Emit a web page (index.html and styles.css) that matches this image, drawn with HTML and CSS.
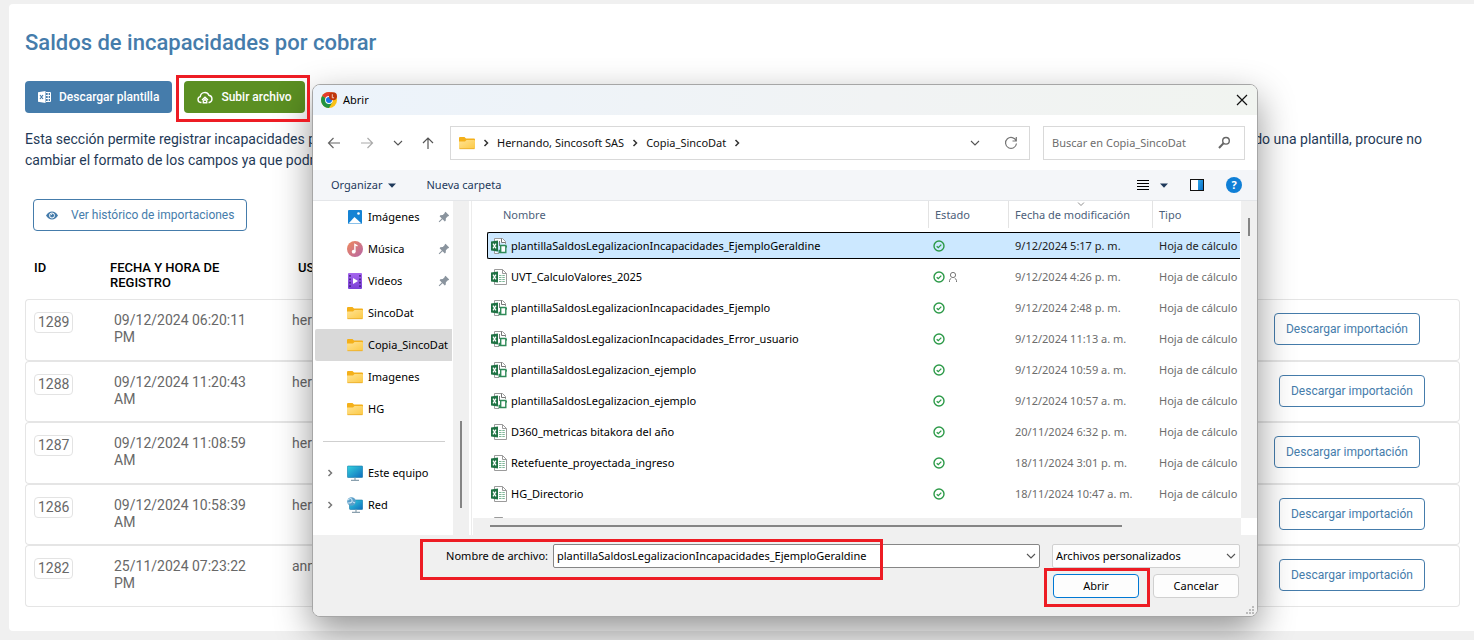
FILE: index.html
```html
<!DOCTYPE html>
<html lang="es">
<head>
<meta charset="utf-8">
<meta name="viewport" content="width=device-width, initial-scale=1">
<title>Saldos de incapacidades por cobrar</title>
<link rel="stylesheet" href="styles.css">
</head>
<body>
<svg class="sprite" aria-hidden="true">
  <defs>
    <linearGradient id="g-folder" x1="0" y1="0" x2="1" y2="1"><stop offset="0" stop-color="#ffe394"/><stop offset="1" stop-color="#fcc944"/></linearGradient>
    <linearGradient id="g-screen" x1="0" y1="0" x2="1" y2="1"><stop offset="0" stop-color="#35d3de"/><stop offset="1" stop-color="#0f6cbd"/></linearGradient>
    <linearGradient id="g-music" x1="0" y1="0" x2="1" y2="1"><stop offset="0" stop-color="#f08a5b"/><stop offset="1" stop-color="#b565a8"/></linearGradient>
    <linearGradient id="g-video" x1="0" y1="0" x2="0" y2="1"><stop offset="0" stop-color="#a566ee"/><stop offset="1" stop-color="#7a3fd6"/></linearGradient>
    <linearGradient id="g-pane" x1="0" y1="0" x2="1" y2="1"><stop offset="0" stop-color="#2fa8ea"/><stop offset="1" stop-color="#0a6fc8"/></linearGradient>
  </defs>
  <symbol id="folder" viewBox="0 0 16 16">
    <path d="M0 3a1 1 0 0 1 1-1h4.500l1.500 1.500h8a1 1 0 0 1 1 1V8H0z" fill="#f4b01a"/>
    <path d="M0 6.500h6L7.500 5H15a1 1 0 0 1 1 1v7a1 1 0 0 1-1 1H1a1 1 0 0 1-1-1z" fill="url(#g-folder)"/>
    <path d="M.5 13.700h15" stroke="#e5a520" stroke-width=".7"/>
  </symbol>
  <symbol id="pin" viewBox="0 0 12 12">
    <path d="M7.500 .8 11.200 4.500 10.400 5.300 9.900 5.200 7.900 7.200 7.700 9.700 6.800 10.400 4.600 8.200 1.400 11.300.7 10.600 3.800 7.400 1.600 5.200 2.300 4.300 4.800 4.100 6.800 2.100 6.700 1.600z" fill="#8a949e"/>
  </symbol>
  <symbol id="chevron-right" viewBox="0 0 8 10"><path d="M2.500 2 5.500 5 2.500 8" fill="none" stroke="currentColor" stroke-width="1.500"/></symbol>
  <symbol id="chevron-down" viewBox="0 0 10 8"><path d="M1 2 5 6 9 2" fill="none" stroke="currentColor" stroke-width="1.100"/></symbol>
  <symbol id="caret" viewBox="0 0 8 5"><path d="M0 .5h8L4 4.700z" fill="currentColor"/></symbol>
  <symbol id="xls" viewBox="0 0 16 16">
    <path d="M3.500 3V.5h8l4 4v11h-12V13" fill="#fff" stroke="#9b9b9b"/>
    <path d="M11.500.5v4h4" fill="none" stroke="#9b9b9b"/>
    <path d="M0 3.500 7 2.500v11L0 12.500z" fill="#1f7244"/>
    <path d="M2 5.700 5 10.300M5 5.700 2 10.300" stroke="#fff" stroke-width="1.200"/>
    <path d="M8 6.500h6M8 8.500h6M8 10.500h6M8 12.500h6" stroke="#7fb899" stroke-dasharray="2.500 .8"/>
  </symbol>
  <symbol id="xls-sync" viewBox="0 0 16 16">
    <path d="M3.500 3V.5h8l3 3V6M3.500 13v2.500H8" fill="#fff" stroke="#9b9b9b"/>
    <path d="M10.500.5v4h4M8.500 3v5" fill="none" stroke="#777"/>
    <path d="M0 3.500 7 2.500v11L0 12.500z" fill="#1f7244"/>
    <path d="M2 5.700 5 10.300M5 5.700 2 10.300" stroke="#fff" stroke-width="1.200"/>
    <path d="M9.700 7.500h5.100v7H8.200v-2h1.500zM14.800 7.500l.8 1.500-.8.500M9.700 14.500V12" fill="#fff" stroke="#2f8a58" stroke-width="1.400"/>
  </symbol>
  <symbol id="synced" viewBox="0 0 12 12"><circle cx="6" cy="6" r="5" fill="none" stroke="#2c9a48" stroke-width="1.400"/><path d="M3.700 6.200 5.300 7.700 8.300 4.600" fill="none" stroke="#2c9a48" stroke-width="1.300"/></symbol>
  <symbol id="person" viewBox="0 0 10 12"><circle cx="5" cy="4" r="2.600" fill="none" stroke="#777"/><path d="M1.500 11V9.500Q1.500 8 3.200 7.500M8.500 11V9.500Q8.500 8 6.800 7.500" fill="none" stroke="#777"/></symbol>
</svg>

<main class="card">
  <h1>Saldos de incapacidades por cobrar</h1>
  <div class="actions">
    <button class="btn btn-primary" type="button">
      <svg width="13" height="12" viewBox="0 0 13 12"><path d="M0 1.300 7.500 0v12L0 10.700z" fill="#fff"/><path d="M8 1.500h4.500v9H8M8 4.500h4.500M8 7.500h4.500M10.200 1.500v9" fill="none" stroke="#fff"/><path d="M2 4 5 8M5 4 2 8" stroke="#457cab" stroke-width="1.200"/></svg>
      Descargar plantilla
    </button>
    <span class="marked mark-upload">
      <button class="btn btn-success" type="button">
        <svg width="16" height="13" viewBox="0 0 16 13" fill="none" stroke="#fff" stroke-width="1.400"><path d="M4.500 11.500H3.700A3 3 0 0 1 3.300 5.600 4.500 4.500 0 0 1 11.900 4.300 3.700 3.700 0 0 1 12.300 11.500h-.8"/><path d="M5 9 8 6.300 11 9M8 8.500 6.300 10v1.800h3.400V10z"/></svg>
        Subir archivo
      </button>
    </span>
  </div>
  <div class="intro">
    <p><span>Esta sección permite registrar incapacidades por</span><span>cobrar, utilizando una plantilla, procure no</span></p>
    <p>cambiar el formato de los campos ya que podría</p>
  </div>
  <button class="btn btn-outline history" type="button">
    <svg width="12" height="9" viewBox="0 0 12 9"><path d="M0 4.500Q2.500.4 6 .4T12 4.500Q9.500 8.600 6 8.600T0 4.500z" fill="#457cab"/><circle cx="6" cy="4.500" r="2.500" fill="none" stroke="#fff" stroke-width="1"/><path d="M4.700 4.200 5.900 3" stroke="#fff"/></svg>
    Ver histórico de importaciones
  </button>
  <table class="imports">
    <thead><tr><th>ID</th><th>FECHA Y HORA DE REGISTRO</th><th>USUARIO</th><th></th></tr></thead>
    <tbody>
      <tr><td><span class="tag">1289</span></td><td>09/12/2024 06:20:11 PM</td><td>hernando</td><td><button class="btn btn-outline" type="button">Descargar importación</button></td></tr>
      <tr class="recent"><td><span class="tag">1288</span></td><td>09/12/2024 11:20:43 AM</td><td>hernando</td><td><button class="btn btn-outline" type="button">Descargar importación</button></td></tr>
      <tr><td><span class="tag">1287</span></td><td>09/12/2024 11:08:59 AM</td><td>hernando</td><td><button class="btn btn-outline" type="button">Descargar importación</button></td></tr>
      <tr class="recent"><td><span class="tag">1286</span></td><td>09/12/2024 10:58:39 AM</td><td>hernando</td><td><button class="btn btn-outline" type="button">Descargar importación</button></td></tr>
      <tr class="recent"><td><span class="tag">1282</span></td><td>25/11/2024 07:23:22 PM</td><td>anna</td><td><button class="btn btn-outline" type="button">Descargar importación</button></td></tr>
    </tbody>
  </table>
</main>

<section class="dialog" role="dialog" aria-labelledby="dialog-title">
  <header class="titlebar">
    <svg width="16" height="16" viewBox="0 0 16 16"><circle cx="8" cy="8" r="8" fill="#fbc116"/><path d="M8 8 1.100 4A8 8 0 0 1 14.900 4z" fill="#e33b2e"/><path d="M8 8 1.100 4A8 8 0 0 0 8 16L11.500 10z" fill="#229342"/><circle cx="8" cy="8" r="3.900" fill="#fff"/><circle cx="8" cy="8" r="3" fill="#1a73e8"/><circle cx="12" cy="4.200" r="4" fill="#bf360c"/><path d="M11.300 2.200v3.600h1.800" fill="none" stroke="#f3c9bb"/></svg>
    <span id="dialog-title">Abrir</span>
    <button class="icon-btn close" type="button" aria-label="Cerrar"><svg width="12" height="12" viewBox="0 0 12 12"><path d="M1 1 11 11M11 1 1 11" stroke="#111" stroke-width="1.200"/></svg></button>
  </header>

  <nav class="navbar">
    <div class="nav-buttons">
      <button class="icon-btn" type="button" aria-label="Atrás"><svg width="14" height="12" viewBox="0 0 14 12" fill="none" stroke="#666" stroke-width="1.200"><path d="M13 6H1.500M6.500 1 1.500 6 6.500 11"/></svg></button>
      <button class="icon-btn" type="button" aria-label="Adelante"><svg width="14" height="12" viewBox="0 0 14 12" fill="none" stroke="#aaa" stroke-width="1.200"><path d="M1 6h11.500M7.500 1 12.500 6 7.500 11"/></svg></button>
      <button class="icon-btn" type="button" aria-label="Recientes"><svg width="10" height="8"><use href="#chevron-down"/></svg></button>
      <button class="icon-btn" type="button" aria-label="Subir"><svg width="12" height="12" viewBox="0 0 12 12" fill="none" stroke="#555" stroke-width="1.200"><path d="M6 12V1M1 6 6 1 11 6"/></svg></button>
    </div>
    <div class="address">
      <svg width="16" height="16"><use href="#folder"/></svg>
      <svg class="sep" width="8" height="10"><use href="#chevron-right"/></svg>
      <span>Hernando, Sincosoft SAS</span>
      <svg class="sep" width="8" height="10"><use href="#chevron-right"/></svg>
      <span>Copia_SincoDat</span>
      <svg class="sep" width="8" height="10"><use href="#chevron-right"/></svg>
      <button class="icon-btn push" type="button" aria-label="Ubicaciones"><svg width="10" height="8"><use href="#chevron-down"/></svg></button>
      <button class="icon-btn refresh" type="button" aria-label="Actualizar"><svg width="14" height="14" viewBox="0 0 14 14" fill="none" stroke="#777" stroke-width="1.200"><path d="M12.200 5A5.500 5.500 0 1 0 12.500 7.500M12.300 1v4H8.500"/></svg></button>
    </div>
    <div class="search">
      <input type="text" placeholder="Buscar en Copia_SincoDat" aria-label="Buscar en Copia_SincoDat">
      <svg width="13" height="13" viewBox="0 0 13 13" fill="none" stroke="#666"><circle cx="8" cy="4.800" r="3.300" stroke-width="1.400"/><path d="M5.500 7.300 1 12" stroke-width="2"/></svg>
    </div>
  </nav>

  <div class="toolbar">
    <button class="tool" type="button">Organizar <svg width="8" height="5"><use href="#caret"/></svg></button>
    <button class="tool" type="button">Nueva carpeta</button>
    <button class="icon-btn push view" type="button" aria-label="Vista"><svg width="12" height="11" viewBox="0 0 12 11"><path d="M0 .5h12M0 3.500h12M0 6.500h12M0 9.500h12" stroke="#000"/></svg><svg width="8" height="5"><use href="#caret"/></svg></button>
    <button class="icon-btn" type="button" aria-label="Panel de vista previa"><svg width="14" height="12" viewBox="0 0 14 12"><rect x=".5" y=".5" width="13" height="11" fill="#fff" stroke="#111"/><path d="M8 1h5v10H8z" fill="url(#g-pane)"/></svg></button>
    <button class="help" type="button" aria-label="Ayuda">?</button>
  </div>

  <div class="browser">
    <aside class="places">
      <ul>
        <li><svg width="16" height="16" viewBox="0 0 16 16"><rect x="1" y="1" width="14" height="14" rx="1" fill="#1583d4"/><path d="M1.500 14.500 7.500 8 14.500 14.500z" fill="#fff"/><circle cx="11.500" cy="4.500" r="1.300" fill="#fff"/></svg><span>Imágenes</span><svg class="pin" width="12" height="12"><use href="#pin"/></svg></li>
        <li><svg width="16" height="16" viewBox="0 0 16 16"><circle cx="8" cy="8" r="8" fill="url(#g-music)"/><circle cx="6.700" cy="10.700" r="1.900" fill="#fff"/><path d="M7.900 10.700V3.500l2.600 1.500" fill="none" stroke="#fff" stroke-width="1.400"/></svg><span>Música</span><svg class="pin" width="12" height="12"><use href="#pin"/></svg></li>
        <li><svg width="16" height="16" viewBox="0 0 16 16"><rect x="1" y="0" width="14" height="16" rx="1" fill="url(#g-video)"/><path d="M3 2v12M13 2v12" stroke="#3c1d78" stroke-width="1.500" stroke-dasharray="1.800 1.600"/><path d="M6 5v6l5-3z" fill="#fff"/></svg><span>Videos</span><svg class="pin" width="12" height="12"><use href="#pin"/></svg></li>
        <li><svg width="16" height="16"><use href="#folder"/></svg><span>SincoDat</span></li>
        <li class="selected"><svg width="16" height="16"><use href="#folder"/></svg><span>Copia_SincoDat</span></li>
        <li><svg width="16" height="16"><use href="#folder"/></svg><span>Imagenes</span></li>
        <li><svg width="16" height="16"><use href="#folder"/></svg><span>HG</span></li>
      </ul>
      <hr>
      <ul>
        <li class="tree"><svg class="expand" width="8" height="10"><use href="#chevron-right"/></svg><svg width="16" height="16" viewBox="0 0 16 16"><rect x=".3" y="1" width="15.400" height="11.500" rx=".8" fill="url(#g-screen)" stroke="#1678a8" stroke-width=".6"/><path d="M8 12.500V15M4 15.300h8" stroke="#8aa0ae" stroke-width="1.200"/></svg><span>Este equipo</span></li>
        <li class="tree"><svg class="expand" width="8" height="10"><use href="#chevron-right"/></svg><svg width="16" height="16" viewBox="0 0 16 16"><rect x="2.500" y="3" width="13.200" height="9.500" rx=".8" fill="url(#g-screen)" stroke="#1678a8" stroke-width=".6"/><path d="M9 12.500V15M5 15.300h8" stroke="#8aa0ae" stroke-width="1.200"/><circle cx="4.500" cy="4.500" r="4.300" fill="#5b9fc9"/><path d="M1 3Q4 0 5 3T1 6M6 5l2 1" fill="none" stroke="#c7e3f2" stroke-width="1.200"/></svg><span>Red</span></li>
      </ul>
    </aside>
    <div class="places-scroll"><i></i></div>
    <div class="files">
      <div class="files-view">
        <table>
          <colgroup><col><col class="c-state"><col class="c-date"><col class="c-type"></colgroup>
          <thead><tr><th>Nombre</th><th>Estado</th><th class="sorted">Fecha de modificación<svg width="8" height="6" viewBox="0 0 10 8"><use href="#chevron-down"/></svg></th><th>Tipo</th></tr></thead>
          <tbody>
            <tr class="selected"><td><svg width="16" height="16"><use href="#xls-sync"/></svg>plantillaSaldosLegalizacionIncapacidades_EjemploGeraldine</td><td><svg width="12" height="12"><use href="#synced"/></svg></td><td>9/12/2024 5:17 p. m.</td><td>Hoja de cálculo</td></tr>
            <tr><td><svg width="16" height="16"><use href="#xls"/></svg>UVT_CalculoValores_2025</td><td><svg width="12" height="12"><use href="#synced"/></svg><svg width="10" height="12"><use href="#person"/></svg></td><td>9/12/2024 4:26 p. m.</td><td>Hoja de cálculo</td></tr>
            <tr><td><svg width="16" height="16"><use href="#xls-sync"/></svg>plantillaSaldosLegalizacionIncapacidades_Ejemplo</td><td><svg width="12" height="12"><use href="#synced"/></svg></td><td>9/12/2024 2:48 p. m.</td><td>Hoja de cálculo</td></tr>
            <tr><td><svg width="16" height="16"><use href="#xls-sync"/></svg>plantillaSaldosLegalizacionIncapacidades_Error_usuario</td><td><svg width="12" height="12"><use href="#synced"/></svg></td><td>9/12/2024 11:13 a. m.</td><td>Hoja de cálculo</td></tr>
            <tr><td><svg width="16" height="16"><use href="#xls-sync"/></svg>plantillaSaldosLegalizacion_ejemplo</td><td><svg width="12" height="12"><use href="#synced"/></svg></td><td>9/12/2024 10:59 a. m.</td><td>Hoja de cálculo</td></tr>
            <tr><td><svg width="16" height="16"><use href="#xls-sync"/></svg>plantillaSaldosLegalizacion_ejemplo</td><td><svg width="12" height="12"><use href="#synced"/></svg></td><td>9/12/2024 10:57 a. m.</td><td>Hoja de cálculo</td></tr>
            <tr><td><svg width="16" height="16"><use href="#xls"/></svg>D360_metricas bitakora del año</td><td><svg width="12" height="12"><use href="#synced"/></svg></td><td>20/11/2024 6:32 p. m.</td><td>Hoja de cálculo</td></tr>
            <tr><td><svg width="16" height="16"><use href="#xls"/></svg>Retefuente_proyectada_ingreso</td><td><svg width="12" height="12"><use href="#synced"/></svg></td><td>18/11/2024 3:01 p. m.</td><td>Hoja de cálculo</td></tr>
            <tr><td><svg width="16" height="16"><use href="#xls"/></svg>HG_Directorio</td><td><svg width="12" height="12"><use href="#synced"/></svg></td><td>18/11/2024 10:47 a. m.</td><td>Hoja de cálculo</td></tr>
            <tr><td><svg width="16" height="16"><use href="#xls"/></svg></td><td></td><td></td><td></td></tr>
          </tbody>
        </table>
      </div>
      <div class="v-scroll"><i></i></div>
      <div class="h-scroll"><i></i></div>
    </div>
  </div>

  <footer class="footer">
    <div class="marked mark-name">
      <label for="filename">Nombre de archivo:</label>
    </div>
    <div class="combo">
      <input id="filename" type="text" value="plantillaSaldosLegalizacionIncapacidades_EjemploGeraldine">
      <svg width="10" height="8"><use href="#chevron-down"/></svg>
    </div>
    <div class="choices">
      <div class="filter">
        <select aria-label="Tipo de archivo"><option>Archivos personalizados</option></select>
        <svg width="10" height="8"><use href="#chevron-down"/></svg>
      </div>
      <div class="confirm">
        <span class="marked mark-open"><button class="dlg-btn default" type="button">Abrir</button></span>
        <span><button class="dlg-btn" type="button">Cancelar</button></span>
      </div>
    </div>
    <svg class="grip" width="8" height="8" viewBox="0 0 8 8" fill="#bbb"><path d="M6 0h2v2H6zM3 3h2v2H3zM6 3h2v2H6zM0 6h2v2H0zM3 6h2v2H3zM6 6h2v2H6z"/></svg>
  </footer>
</section>
</body>
</html>
```
FILE: styles.css
```css
* { box-sizing: border-box; }

body {
  margin: 0;
  min-height: 100vh;
  padding: 4px 0 9px 9px;
  overflow: hidden;
  position: relative;
  background: #f0f0f0;
  font: 14px/21px Roboto, "Liberation Sans", sans-serif;
  color: #1f3a57;
}

button, input, select { font: inherit; color: inherit; margin: 0; }
svg { flex: none; display: block; }
.sprite { position: absolute; width: 0; height: 0; }

/* Page card */
.card {
  padding: 25px 14px 24px 16px;
  background: #fff;
  border-radius: 4px 0 0 4px;
}

h1 {
  margin: 0 0 24px;
  font-size: 22px;
  line-height: 28px;
  font-weight: 500;
  color: #457cab;
}

.actions { display: flex; gap: 12px; }

.btn {
  display: inline-flex;
  align-items: center;
  height: 32px;
  padding: 0 12px;
  border: 1px solid transparent;
  border-radius: 4px;
  font-size: 12px;
  line-height: 16px;
  font-weight: 500;
  white-space: nowrap;
}
.btn svg { margin-right: 8px; }
.btn-primary { background: #457cab; color: #fff; }
.btn-success { background: #5b8f22; color: #fff; }
.btn-outline { background: #fff; border-color: #457cab; color: #457cab; font-weight: 400; }

.intro { margin: 16px 38px 28px 0; }
.intro p { display: flex; justify-content: space-between; margin: 0; }

.history { margin-left: 8px; }
.history svg { margin-right: 13px; }

.imports {
  width: 100%;
  margin-top: 29px;
  border-collapse: separate;
  border-spacing: 0;
  table-layout: fixed;
  color: #686868;
}
.imports th {
  padding: 0 0 9px 9px;
  vertical-align: top;
  text-align: left;
  font-size: 13px;
  line-height: 15px;
  font-weight: 500;
  color: #000;
}
.imports th:nth-child(1) { width: 81px; }
.imports th:nth-child(2) { width: 182px; padding: 0 40px 9px 4px; }
.imports th:nth-child(3) { width: 200px; padding-left: 10px; }
.imports td {
  height: 62px;
  padding: 12px 0 0 9px;
  vertical-align: top;
  line-height: 17px;
  border: solid #e5e5e5;
  border-width: 1px 0;
}
.imports tr:nth-child(even) td { height: 61px; }
.imports td:nth-child(2) { padding-left: 8px; padding-right: 40px; }
.imports td:nth-child(3) { padding-left: 4px; }
.imports td:first-child { border-left-width: 1px; border-radius: 4px 0 0 4px; padding-left: 8px; }
.imports td:last-child { border-right-width: 1px; border-radius: 0 4px 4px 0; text-align: right; padding: 13px 39px 0 0; }
.imports tr.recent td:last-child { padding-right: 34px; }
.imports .btn { padding: 0 11px; }

.tag {
  display: inline-block;
  padding: 1px 3px;
  border: 1px solid #e3e3e3;
  border-radius: 4px;
}

/* Red call-out frames */
.marked { position: relative; }
.marked::after {
  content: "";
  box-sizing: border-box;
  position: absolute;
  z-index: 5;
  border: 3px solid #ed1c24;
  pointer-events: none;
}
.mark-upload::after { inset: -6px -5px -9px -8px; }
.mark-name::after { top: -5px; left: 107px; width: 463px; height: 41px; }
.mark-open::after { inset: -6px -11px -9px -9px; }

/* File dialog */
.dialog {
  position: absolute;
  top: 84px;
  left: 312px;
  right: 216px;
  z-index: 2;
  overflow: hidden;
  border: 1px solid #a6a6a6;
  border-radius: 8px;
  background: #fff;
  box-shadow: 0 14px 36px rgba(0, 0, 0, .42);
  font: 11px/16px "Noto Sans", "Open Sans", sans-serif;
  color: #000;
}

.icon-btn {
  display: flex;
  align-items: center;
  padding: 0;
  border: 0;
  background: none;
  color: #555;
}
.push { margin-left: auto; }

.titlebar {
  display: flex;
  align-items: center;
  gap: 6px;
  height: 30px;
  padding: 0 9px 0 8px;
  background: linear-gradient(90deg, #ecf3fb, #f1f3f4 60%, #f1f4f0);
}
.close { margin-left: auto; }

.navbar { display: flex; align-items: center; height: 55px; padding: 0 12px 0 14px; }
.nav-buttons { display: flex; align-items: center; width: 123px; gap: 19px; }
.address, .search {
  display: flex;
  align-items: center;
  height: 34px;
  border: 1px solid #d9d9d9;
}
.address { flex: 1; padding: 0 11px 0 8px; gap: 7px; color: #111; }
.sep { color: #333; }
.refresh { margin-left: 17px; }
.search { width: 202px; margin-left: 13px; padding: 0 13px 0 8px; }
.search input { flex: 1; min-width: 0; padding: 0; border: 0; outline: 0; background: none; }
.search input::placeholder { color: #6d6d6d; opacity: 1; }

.toolbar {
  display: flex;
  align-items: center;
  gap: 22px;
  height: 31px;
  padding: 0 15px 0 18px;
  background: #f4f6f9;
  border-bottom: 1px solid #e4e6e9;
  color: #1e395b;
}
.tool { display: flex; align-items: center; gap: 6px; padding: 0; margin-right: 8px; border: 0; background: none; }
.toolbar .icon-btn { color: #1e395b; }
.view { gap: 11px; }
.help {
  width: 16px;
  height: 16px;
  padding: 0;
  border: 0;
  border-radius: 50%;
  background: #0f7fd6;
  color: #fff;
  font-weight: 700;
}

.browser { display: flex; height: 334px; }

.places { width: 140px; overflow: hidden; }
.places ul { margin: 0; padding: 0; list-style: none; }
.places li {
  display: flex;
  align-items: center;
  height: 32px;
  margin: 0 1px 0 2px;
  padding-left: 32px;
  gap: 5px;
  white-space: nowrap;
}
.places li.selected { background: #d9d9d9; border-radius: 2px 0 0 2px; }
.places .pin { margin: 0 2px 0 auto; }
.places li.tree { padding-left: 11px; }
.places .expand { margin-right: 8px; color: #777; }
.places hr { margin: 16px 8px 15px 10px; border: 0; border-top: 1px solid #cfcfcf; }

.places-scroll { width: 16px; padding: 220px 0 0 7px; background: #f0f0f0; }
.places-scroll i { display: block; width: 2px; height: 87px; background: #858585; }

.files {
  flex: 1;
  min-width: 0;
  display: grid;
  grid-template: 1fr 17px / 1fr 16px;
  margin-left: 2px;
  border-left: 1px solid #ececec;
}
.files-view { overflow: hidden; padding: 0 1px 0 15px; min-height: 0; height: 317px; }
.files table {
  width: 100%;
  margin-top: -4px;
  border-collapse: separate;
  border-spacing: 0 4px;
  table-layout: fixed;
  color: #6d6d6d;
}
.c-state { width: 80px; }
.c-date { width: 144px; }
.c-type { width: 88px; }
.files th {
  height: 27px;
  padding: 0 0 0 6px;
  border-left: 1px solid #e3e3e3;
  text-align: left;
  font-weight: 400;
  color: #4c607a;
  white-space: nowrap;
}
.files th:first-child { padding-left: 16px; border-left: 0; }
.sorted { position: relative; }
.sorted svg { position: absolute; top: 0; left: 68px; color: #777; }
.files td {
  height: 27px;
  padding: 0 0 0 7px;
  overflow: hidden;
  white-space: nowrap;
}
.files td svg { display: inline-block; vertical-align: -4px; }
.files td:first-child { padding-left: 4px; color: #000; }
.files td:first-child svg { margin-right: 4px; }
.files td:nth-child(2) { padding-left: 5px; font-size: 0; }
.files td:nth-child(2) svg { vertical-align: middle; }
.files td:nth-child(2) svg + svg { margin-left: 3px; }
.files tr.selected td { background: #cce8ff; border: solid #000; border-width: 1px 0; color: #222; }
.files tr.selected td:first-child { border-left-width: 1px; padding-left: 3px; border-radius: 2px 0 0 2px; color: #000; }

.v-scroll { background: #f0f0f0; padding: 17px 0 0 7px; }
.v-scroll i { display: block; width: 2px; height: 18px; background: #858585; }
.h-scroll { margin-left: 1px; padding: 7px 119px 0 17px; background: #f0f0f0; }
.h-scroll i { display: block; height: 2px; background: #858585; }

.footer {
  display: flex;
  align-items: flex-start;
  position: relative;
  height: 81px;
  padding: 9px 17px 0 0;
  background: #f0f0f0;
}
.mark-name { width: 240px; padding: 4px 5px 0 0; text-align: right; }
.combo, .filter { position: relative; display: flex; height: 24px; }
.combo { flex: 1; }
.combo input, .filter select {
  width: 100%;
  padding: 0 20px 0 3px;
  border: 1px solid #868686;
  border-radius: 2px;
  background: #fff;
  outline: 0;
  appearance: none;
}
.filter select { border-color: #d0d0d0; background: #fdfdfd; }
.combo svg, .filter svg { position: absolute; right: 4px; top: 8px; color: #555; pointer-events: none; }
.choices { display: flex; flex-direction: column; gap: 6px; width: 188px; margin-left: 12px; }
.confirm { display: flex; gap: 14px; padding: 0 1px; }
.confirm > * { flex: 1; }
.dlg-btn {
  display: block;
  width: 100%;
  height: 24px;
  padding: 0;
  border: 1px solid #d0d0d0;
  border-radius: 4px;
  background: #fdfdfd;
}
.dlg-btn.default { border-color: #0078d4; }
.grip { position: absolute; right: 3px; bottom: 2px; }
```
